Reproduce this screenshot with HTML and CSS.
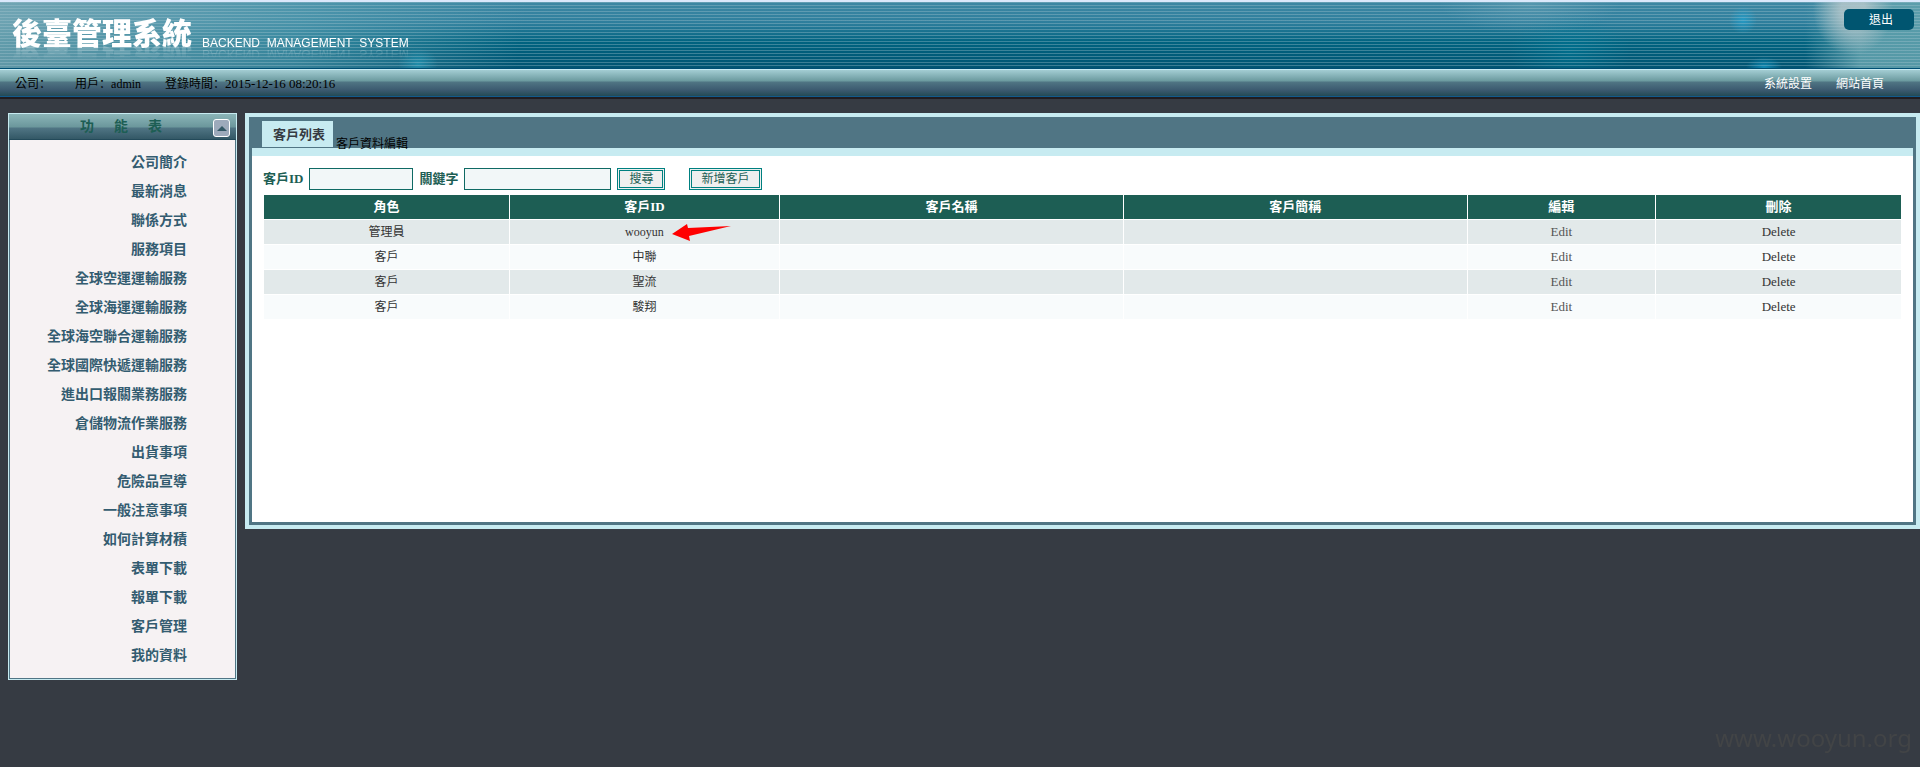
FILE: index.html
```html
<!DOCTYPE html>
<html lang="zh-Hant">
  <head>
    <title>後臺管理系統</title>
    <meta charset="UTF-8" />
    <meta name="viewport" content="width=device-width, initial-scale=1.0" />
    <link rel="stylesheet" href="styles.css">
  </head>
  <body>
    <header class="banner">
      <h1 class="logo">後臺管理系統</h1>
      <span class="slogan">BACKEND&nbsp; MANAGEMENT&nbsp; SYSTEM</span>
      <button type="button" class="logout">退出</button>
    </header>

    <div class="toolbar">
      <span class="company">公司<span lang="zh-Hans" class="colon">：</span></span>
      <span class="user">用戶<span lang="zh-Hans" class="colon">：</span>admin</span>
      <span>登錄時間<span lang="zh-Hans" class="colon">：</span><span class="time">2015-12-16 08:20:16</span></span>
      <nav class="top-links">
        <a href="#">系統設置</a>
        <a href="#">網站首頁</a>
      </nav>
    </div>

    <div class="main">
      <aside class="sidebar">
        <div class="sidebar-head">
          <h2><span>功</span><span>能</span><span>表</span></h2>
          <button type="button" class="collapse" aria-label="收合">
            <svg width="10" height="5" viewBox="0 0 10 5"><path d="M0 5 L5 0 L10 5 Z" fill="#335866" /></svg>
          </button>
        </div>
        <ul class="menu">
          <li><a href="#">公司簡介</a></li>
          <li><a href="#">最新消息</a></li>
          <li><a href="#">聯係方式</a></li>
          <li><a href="#">服務項目</a></li>
          <li><a href="#">全球空運運輸服務</a></li>
          <li><a href="#">全球海運運輸服務</a></li>
          <li><a href="#">全球海空聯合運輸服務</a></li>
          <li><a href="#">全球國際快遞運輸服務</a></li>
          <li><a href="#">進出口報關業務服務</a></li>
          <li><a href="#">倉儲物流作業服務</a></li>
          <li><a href="#">出貨事項</a></li>
          <li><a href="#">危險品宣導</a></li>
          <li><a href="#">一般注意事項</a></li>
          <li><a href="#">如何計算材積</a></li>
          <li><a href="#">表單下載</a></li>
          <li><a href="#">報單下載</a></li>
          <li><a href="#">客戶管理</a></li>
          <li><a href="#">我的資料</a></li>
        </ul>
      </aside>

      <section class="panel">
        <div class="tabs">
          <a href="#" class="tab active">客戶列表</a>
          <a href="#" class="tab">客戶資料編輯</a>
        </div>
        <div class="content">
          <form class="search">
            <label for="customerId">客戶ID</label>
            <input type="text" id="customerId" class="input-id" />
            <label for="keyword">關鍵字</label>
            <input type="text" id="keyword" class="input-key" />
            <button type="button">搜尋</button>
            <button type="button" class="add">新增客戶</button>
          </form>

          <table class="list">
            <colgroup>
              <col class="col-role"><col class="col-id"><col class="col-name"><col class="col-name"><col class="col-edit"><col class="col-delete">
            </colgroup>
            <thead>
              <tr><th>角色</th><th>客戶ID</th><th>客戶名稱</th><th>客戶簡稱</th><th>編輯</th><th>刪除</th></tr>
            </thead>
            <tbody>
              <tr>
                <td>管理員</td>
                <td>
                  <span class="marked">wooyun
                    <svg class="arrow" width="59" height="17" viewBox="0 0 59 17"><path d="M0 10 L15 0 L16 4 L59 2 L17 12 L18 17 Z" fill="#ff0000" /></svg>
                  </span>
                </td>
                <td></td><td></td>
                <td><a href="#" class="edit">Edit</a></td>
                <td><a href="#">Delete</a></td>
              </tr>
              <tr><td>客戶</td><td>中聯</td><td></td><td></td><td><a href="#" class="edit">Edit</a></td><td><a href="#">Delete</a></td></tr>
              <tr><td>客戶</td><td>聖流</td><td></td><td></td><td><a href="#" class="edit">Edit</a></td><td><a href="#">Delete</a></td></tr>
              <tr><td>客戶</td><td>駿翔</td><td></td><td></td><td><a href="#" class="edit">Edit</a></td><td><a href="#">Delete</a></td></tr>
            </tbody>
          </table>
        </div>
      </section>
    </div>

    <div class="watermark">www.wooyun.org</div>
  </body>
</html>
```
FILE: styles.css
```css
* {
  box-sizing: border-box;
}
body {
  margin: 0;
  min-height: 100vh;
  background-color: #363b43;
  font-family: "Liberation Serif", "Noto Sans CJK TC", serif;
  font-size: 12px;
  color: #000;
}
a {
  color: inherit;
  text-decoration: none;
}
button {
  font-family: inherit;
  cursor: pointer;
}

/* banner */
.banner {
  display: flex;
  align-items: flex-start;
  height: 69px;
  padding: 6px 6px 0 12px;
  border-top: 2px solid #dbe8fb;
  border-bottom: 1px solid #004f74;
  background:
    repeating-linear-gradient(to bottom, rgba(170,200,210,0.35) 0 1px, transparent 1px 3px),
    radial-gradient(circle at right 177px top 18px, rgba(35,160,205,0.8), transparent 14px),
    radial-gradient(ellipse 18px 10px at right 156px top 65px, rgba(20,150,195,0.8), transparent),
    radial-gradient(ellipse 20px 16px at 418px 62px, rgba(35,150,180,0.8), transparent),
    radial-gradient(ellipse 40px 45px at right 67px top 8px, rgba(175,195,200,0.9) 30%, transparent),
    radial-gradient(ellipse 90px 30px at right 390px top 2px, rgba(110,165,185,0.5), transparent),
    radial-gradient(ellipse 60px 40px at right 350px top 50px, rgba(0,125,155,0.5), transparent),
    linear-gradient(to left, rgba(95,160,172,0.9) 60px, transparent 115px),
    linear-gradient(100deg, rgba(130,175,185,0.75) 0, rgba(90,160,178,0.6) 300px, transparent 520px),
    linear-gradient(to bottom, #3d87a3 0, #2f7f9d 20px, #006380 40px, #005472 100%);
}
.logo {
  margin: 5px 0 0;
  font-family: "Noto Sans CJK TC", sans-serif;
  font-size: 30px;
  font-weight: 900;
  line-height: 36px;
  color: #fff;
  -webkit-box-reflect: below -7px linear-gradient(transparent 50%, rgba(255,255,255,0.3));
}
.slogan {
  margin: 27px 0 0 10px;
  font-family: "Liberation Sans", sans-serif;
  font-size: 12px;
  line-height: 16px;
  color: #fff;
  -webkit-box-reflect: below -5px linear-gradient(transparent 20%, rgba(255,255,255,0.3));
}
.logout {
  width: 70px;
  height: 21px;
  margin: 1px 0 0 auto;
  padding: 0 0 2px 4px;
  border: none;
  border-radius: 5px;
  background-color: #005570;
  color: #fff;
  font-size: 12px;
}

/* status bar */
.toolbar {
  display: flex;
  align-items: center;
  height: 30px;
  padding: 0 36px 2px 15px;
  border-top: 1px solid #c5eaf2;
  border-bottom: 2px solid #201c20;
  background: linear-gradient(to bottom, #a3cdd3 0, #6b9a9f 11px, #507584 12px, #3c5a70 20px, #234a55 26px, #125a8c 26px);
}
.colon {
  font-family: "Noto Sans CJK SC", sans-serif;
}
.company,
.user {
  margin-right: 24px;
}
.time {
  font-size: 13px;
}
.top-links {
  display: flex;
  gap: 24px;
  margin-left: auto;
  color: #fff;
}

.main {
  display: flex;
  align-items: flex-start;
  gap: 8px;
  padding: 14px 0 0 8px;
}

/* left menu */
.sidebar {
  flex: none;
  width: 229px;
  border: 1px solid #c7ebf1;
  outline: 1px solid #507584;
  outline-offset: -2px;
  background-color: #f6f2f3;
}
.sidebar-head {
  position: relative;
  height: 26px;
  border-bottom: 1px solid #234a5a;
  background: linear-gradient(to bottom, #8bb5b8 0, #6b979c 13px, #507584 14px, #335866 100%);
}
.sidebar-head h2 {
  display: flex;
  gap: 20px;
  margin: 0;
  padding-left: 71px;
  font-size: 14px;
  line-height: 26px;
  color: #1d5e54;
}
.collapse {
  position: absolute;
  top: 5px;
  right: 6px;
  display: flex;
  align-items: center;
  justify-content: center;
  width: 17px;
  height: 18px;
  padding: 0;
  border: 1px solid #fff;
  border-radius: 3px;
  background-color: #9daabb;
}
.menu {
  list-style: none;
  margin: 0;
  padding: 8px 49px 9px 0;
  text-align: right;
}
.menu li {
  height: 29px;
  line-height: 29px;
  font-size: 14px;
  font-weight: bold;
  color: #335c70;
}

/* right panel */
.panel {
  flex: 1;
  min-height: 416px;
  border: 4px solid #c7ebf1;
  outline: 3px solid #507584;
  outline-offset: -7px;
  background-color: #fff;
}
.tabs {
  display: flex;
  align-items: flex-start;
  padding: 4px 0 0 13px;
  height: 31px;
  background-color: #507584;
}
.tab {
  margin: 14px 0 0 3px;
  line-height: 18px;
}
.tab.active {
  margin: 0;
  width: 71px;
  height: 26px;
  padding-left: 11px;
  background-color: #c7ebf1;
  color: #363b43;
  font-size: 13px;
  font-weight: bold;
  line-height: 28px;
}
.content {
  margin: 0 3px;
  padding: 12px 11px 0;
  border-top: 8px solid #c7ebf1;
}
.search {
  display: flex;
  align-items: center;
  margin-bottom: 4px;
}
.search label {
  font-size: 13px;
  font-weight: bold;
  line-height: 22px;
  color: #1d5e54;
}
.search input {
  height: 22px;
  margin: 0 6px;
  border: 1px solid #0f6a64;
  background-color: #f2f7f8;
}
.search .input-id {
  width: 104px;
}
.search .input-key {
  width: 147px;
}
.search button {
  height: 22px;
  padding: 0 9px;
  border: 3px double #008080;
  background-color: #efefef;
  font-size: 12px;
  line-height: 16px;
  color: #1d5e54;
}
.search .add {
  margin-left: 24px;
}
.list {
  width: 100%;
  table-layout: fixed;
  border-collapse: separate;
  border-spacing: 1px;
  color: #333;
  text-align: center;
}
.list th,
.list td {
  height: 24px;
  padding: 0;
  line-height: 22px;
}
.list th {
  background-color: #1d5e54;
  font-size: 13px;
  color: #fff;
}
.list tr:nth-child(odd) td {
  background-color: #e2e9ea;
}
.list tr:nth-child(even) td {
  background-color: #f8fbfc;
}
.list thead tr th {
  background-color: #1d5e54;
}
.list a {
  font-size: 13px;
}
.list .edit {
  color: #555;
}
.col-role, .col-delete {
  width: 15%;
}
.col-id {
  width: 16.5%;
}
.col-name {
  width: 21%;
}
.marked {
  position: relative;
}
.arrow {
  position: absolute;
  top: -1px;
  left: 47px;
}

.watermark {
  position: fixed;
  right: 8px;
  bottom: 12px;
  font-family: "Noto Sans", sans-serif;
  font-size: 24px;
  line-height: 34px;
  color: #424446;
}
```
